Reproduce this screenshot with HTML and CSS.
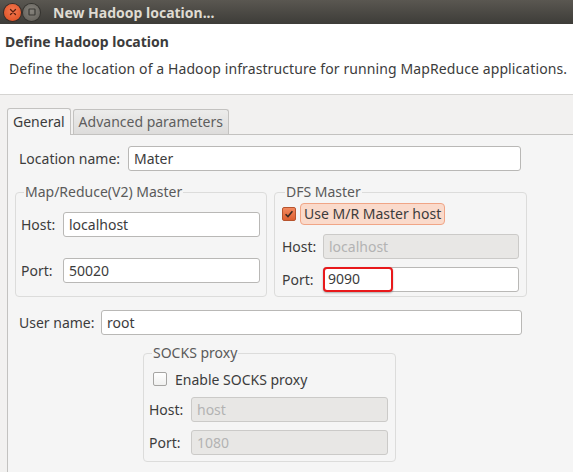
FILE: index.html
```html
<!DOCTYPE html>
<html>
<head>
<meta charset="utf-8">
<link rel="stylesheet" href="styles.css">
</head>
<body>
<div class="window">
  <div class="titlebar">
    <span class="wbtn close"><svg width="16" height="16" viewBox="0 0 16 16"><path d="M5.5 5.5L10.5 10.5M10.5 5.5L5.5 10.5" stroke="#5a2010" stroke-width="1.3" stroke-linecap="round"/></svg></span>
    <span class="wbtn min"><svg width="16" height="16" viewBox="0 0 16 16"><rect x="5" y="5" width="6" height="6" rx="0.5" fill="none" stroke="#3a3935" stroke-width="1.2"/></svg></span>
    <span class="title">New Hadoop location...</span>
  </div>
  <div class="header">
    <div class="h-title">Define Hadoop location</div>
    <div class="h-desc">Define the location of a Hadoop infrastructure for running MapReduce applications.</div>
  </div>
  <div class="content">
    <div class="tabs">
      <div class="tab active">General</div>
      <div class="tab">Advanced parameters</div>
    </div>
    <div class="panel">
      <div class="row loc-row">
        <label class="lbl">Location name:</label>
        <div class="input loc-input">Mater</div>
      </div>
      <div class="groups">
        <fieldset class="group mr">
          <legend>Map/Reduce(V2) Master</legend>
          <div class="grow mr-host"><label class="lbl">Host:</label><div class="input">localhost</div></div>
          <div class="grow mr-port"><label class="lbl">Port:</label><div class="input">50020</div></div>
        </fieldset>
        <fieldset class="group dfs">
          <legend>DFS Master</legend>
          <div class="check-row d-check">
            <span class="cb checked"><svg width="14" height="14" viewBox="0 0 14 14"><path d="M3 7.2L5.8 10L11 3.8" fill="none" stroke="#3a2a22" stroke-width="1.8"/></svg></span>
            <span class="focus-lbl">Use M/R Master host</span>
          </div>
          <div class="grow dfs-host"><label class="lbl">Host:</label><div class="input disabled">localhost</div></div>
          <div class="grow dfs-port"><label class="lbl">Port:</label><div class="input port-input"><span class="hl">9090</span></div></div>
        </fieldset>
      </div>
      <div class="row user-row">
        <label class="lbl">User name:</label>
        <div class="input user-input">root</div>
      </div>
      <fieldset class="group socks">
        <legend>SOCKS proxy</legend>
        <div class="check-row s-check">
          <span class="cb"></span>
          <span class="plain-lbl">Enable SOCKS proxy</span>
        </div>
        <div class="grow s-host"><label class="lbl">Host:</label><div class="input disabled">host</div></div>
        <div class="grow s-port"><label class="lbl">Port:</label><div class="input disabled">1080</div></div>
      </fieldset>
    </div>
  </div>
</div>
</body>
</html>
```

FILE: styles.css
```css
* { box-sizing: border-box; }
html, body { margin: 0; padding: 0; }
body {
  width: 573px;
  height: 472px;
  overflow: hidden;
  font-family: "Noto Sans", "Open Sans", sans-serif;
  font-size: 14px;
  color: #3c3c3c;
  background: #f2f1f0;
}
.window { width: 573px; height: 472px; display: flex; flex-direction: column; }

.titlebar {
  height: 24px;
  flex: none;
  display: flex;
  align-items: center;
  padding-left: 4px;
  background: linear-gradient(#5a5751, #3d3c38);
}
.wbtn {
  width: 17px; height: 17px; border-radius: 50%;
  display: flex; align-items: center; justify-content: center;
  margin-right: 2px;
}
.wbtn.close { background: radial-gradient(circle at 50% 40%, #f47a52, #dd4a1c); box-shadow: 0 0 0 1px #3a2b26; }
.wbtn.min { background: radial-gradient(circle at 50% 40%, #86837c, #5f5c56); box-shadow: 0 0 0 1px #34332f; }
.title {
  margin-left: 11px;
  font-weight: bold;
  font-size: 14px;
  color: #dfdbd2;
}

.header {
  flex: none;
  height: 71px;
  background: #ffffff;
  border-bottom: 1px solid #d5d4d2;
  padding: 8px 0 0 5px;
}
.h-title { font-weight: bold; font-size: 14px; color: #3c3c3c; height: 24px; line-height: 20px; }
.h-desc { margin-left: 4px; margin-top: 3px; font-size: 14px; letter-spacing: 0.1px; }

.content { flex: 1; padding: 12px 0 0 7px; }
.tabs { display: flex; align-items: flex-end; padding-left: 0; height: 27px; }
.tab {
  height: 25px;
  padding: 0 5px;
  line-height: 23px;
  border: 1px solid #c3c2c0;
  border-bottom: none;
  border-radius: 3px 3px 0 0;
  background: linear-gradient(#ececeb, #dddcdb);
  color: #5e5e5e;
  margin-right: 2px;
}
.tab.active {
  height: 27px;
  background: #f5f5f5;
  color: #3c3c3c;
  position: relative;
  top: 1px;
  line-height: 25px;
}
.panel {
  border-top: 1px solid #c3c2c0;
  border-left: 1px solid #c3c2c0;
  background: #f5f5f5;
  height: 340px;
  padding: 11px 0 0 11px;
}
.row { display: flex; align-items: center; }
.lbl { white-space: nowrap; }
.input {
  height: 25px;
  border: 1px solid #b9b8b6;
  border-radius: 3px;
  background: #ffffff;
  padding: 0 5px;
  line-height: 23px;
  color: #3c3c3c;
  flex: 1;
}
.input.disabled { background: #e8e7e5; color: #b3b3b3; border-color: #cbcac8; }
.loc-row .lbl { width: 109px; flex: none; }
.loc-input { flex: none; width: 393px; }

.groups { display: flex; margin-top: 13px; margin-left: -4px; }
fieldset.group {
  margin: 0;
  border: 1px solid #dcdcdb;
  border-radius: 4px;
  padding: 0;
}
legend { padding: 0 1px; margin-left: 3px; color: #5a5a5a; line-height: 16px; }
.group.mr { width: 252px; height: 113px; padding: 5px 6px 0 5px; }
.group.dfs { width: 253px; height: 113px; margin-left: 7px; padding: 0 7px 0 7px; }
.grow { display: flex; align-items: center; }
.grow .lbl { width: 42px; flex: none; }
.mr-host { margin-top: 7px; }
.mr-port { margin-top: 21px; }

.check-row { display: flex; align-items: center; height: 22px; }
.d-check { margin-top: 3px; }
.cb {
  width: 14px; height: 14px; border-radius: 2px;
  border: 1px solid #a9a8a6;
  background: linear-gradient(#ffffff, #f0f0ef);
  display: inline-flex; align-items: center; justify-content: center;
  flex: none;
}
.cb.checked { border-color: #b7542d; background: linear-gradient(#f28a60, #dd5f30); }
.focus-lbl {
  margin-left: 4px;
  padding: 0 3px 0 3px;
  height: 22px; line-height: 20px;
  border: 1px solid #f0a586;
  border-radius: 4px;
  background: #fadacb;
}
.dfs .grow .lbl { width: 41px; }
.dfs-host { margin-top: 9px; }
.dfs-port { margin-top: 8px; }
.port-input { padding: 0; position: relative; }
.hl {
  display: inline-block;
  height: 25px;
  width: 70px;
  margin-top: -1px;
  margin-left: -1px;
  border: 2.5px solid #e8191b;
  border-radius: 4px;
  padding-left: 3px;
  line-height: 19px;
  box-shadow: 0 1px 2px rgba(0,0,0,0.3);
  vertical-align: top;
}

.user-row { margin-top: 13px; }
.user-row .lbl { width: 82px; flex: none; }
.user-input { flex: none; width: 421px; }

.group.socks { width: 253px; height: 117px; margin-left: 124px; margin-top: 10px; padding: 0 7px 0 5px; }
.s-check { margin-top: 7px; margin-left: 4px; }
.s-check .cb { border-radius: 2px; border-color: #a6a5a3; }
.plain-lbl { margin-left: 8px; }
.socks .grow .lbl { width: 42px; }
.s-host { margin-top: 7px; }
.s-port { margin-top: 8px; }
```
